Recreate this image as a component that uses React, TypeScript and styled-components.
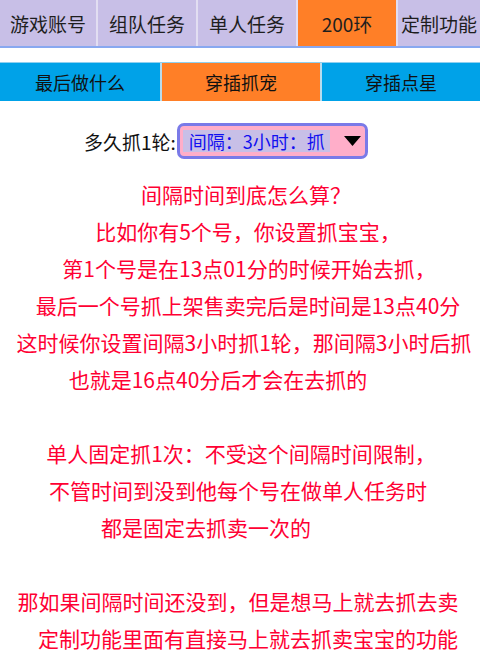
import React from "react";
import styled, { createGlobalStyle } from "styled-components";

const Global = createGlobalStyle`
  html, body { margin: 0; padding: 0; background: #ffffff; }
  body { font-family: "Noto Sans CJK SC", "Noto Sans", sans-serif; }
`;

const Page = styled.div`
  width: 480px;
  height: 655px;
  overflow: hidden;
  background: #fff;
`;

const TopBar = styled.div`
  display: grid;
  grid-template-columns: 98px 100px 100px 100px 1fr;
  height: 46px;
  border-bottom: 2px solid #88a8f0;
  background: #e4e0f4;
`;

const TopTab = styled.div<{ $active?: boolean }>`
  display: flex;
  align-items: center;
  justify-content: center;
  background: ${(p) => (p.$active ? "#ff7f27" : "#c8bfe7")};
  color: #1e1e1e;
  font-size: 19px;
  white-space: nowrap;
  border-right: 2px solid #e2def2;
  &:last-child { border-right: none; }
`;

const SubBar = styled.div`
  margin-top: 14px;
  display: grid;
  grid-template-columns: 160px 160px 160px;
  height: 38px;
  border-top: 1px solid #8fd0f0;
`;

const SubTab = styled.div<{ $active?: boolean; $divider?: boolean }>`
  display: flex;
  align-items: center;
  justify-content: center;
  background: ${(p) => (p.$active ? "#ff7f27" : "#00a2e8")};
  color: #111;
  font-size: 18px;
  border-left: ${(p) => (p.$divider ? "2px solid #b8dcee" : "none")};
`;

const SettingRow = styled.div`
  margin-top: 22px;
  display: flex;
  align-items: center;
  padding-left: 84px;
  height: 36px;
`;

const Label = styled.span`
  font-size: 19px;
  color: #111;
  margin-right: 1px;
  white-space: nowrap;
`;

const Select = styled.div`
  box-sizing: border-box;
  width: 191px;
  height: 36px;
  border: 3px solid #7a7ae8;
  border-radius: 7px;
  background: #ffaec9;
  display: flex;
  align-items: center;
  padding: 0 0 0 3px;
`;

const SelectValue = styled.span`
  flex: none;
  background: #c8bfe7;
  color: #1010f0;
  font-size: 18px;
  height: 22px;
  line-height: 22px;
  padding: 0 5px 0 6px;
  white-space: nowrap;
`;

const Arrow = styled.svg`
  flex: none;
  margin-left: 14px;
`;

const Notes = styled.div`
  margin-top: 17px;
  display: flex;
  flex-direction: column;
`;

const Line = styled.div<{ $shift: number }>`
  height: 37px;
  line-height: 37px;
  text-align: center;
  color: #ff0033;
  font-size: 21px;
  white-space: nowrap;
  padding-left: ${(p) => (p.$shift > 0 ? p.$shift * 2 : 0)}px;
  padding-right: ${(p) => (p.$shift < 0 ? -p.$shift * 2 : 0)}px;
`;

const topTabs = ["游戏账号", "组队任务", "单人任务", "200环", "定制功能"];
const subTabs = ["最后做什么", "穿插抓宠", "穿插点星"];

const lines: [string, number][] = [
  ["间隔时间到底怎么算？", 6],
  ["比如你有5个号，你设置抓宝宝，", 8],
  ["第1个号是在13点01分的时候开始去抓，", 9],
  ["最后一个号抓上架售卖完后是时间是13点40分", 8],
  ["这时候你设置间隔3小时抓1轮，那间隔3小时后抓", 4],
  ["也就是16点40分后才会在去抓的", -22],
  ["", 0],
  ["单人固定抓1次：不受这个间隔时间限制，", 1],
  ["不管时间到没到他每个号在做单人任务时", -2],
  ["都是固定去抓卖一次的", -34],
  ["", 0],
  ["那如果间隔时间还没到，但是想马上就去抓去卖", -2],
  ["定制功能里面有直接马上就去抓卖宝宝的功能", 8],
];

export default function App() {
  return (
    <Page>
      <Global />
      <TopBar>
        {topTabs.map((t, i) => (
          <TopTab key={t} $active={i === 3}>
            {t}
          </TopTab>
        ))}
      </TopBar>
      <SubBar>
        {subTabs.map((t, i) => (
          <SubTab key={t} $active={i === 1} $divider={i > 0}>
            {t}
          </SubTab>
        ))}
      </SubBar>
      <SettingRow>
        <Label>多久抓1轮:</Label>
        <Select>
          <SelectValue>间隔：3小时：抓</SelectValue>
          <Arrow width="17" height="10" viewBox="0 0 17 10">
            <polygon points="0,0 17,0 8.5,10" fill="#000" />
          </Arrow>
        </Select>
      </SettingRow>
      <Notes>
        {lines.map(([t, s], i) => (
          <Line key={i} $shift={s}>
            {t || "\u00a0"}
          </Line>
        ))}
      </Notes>
    </Page>
  );
}
